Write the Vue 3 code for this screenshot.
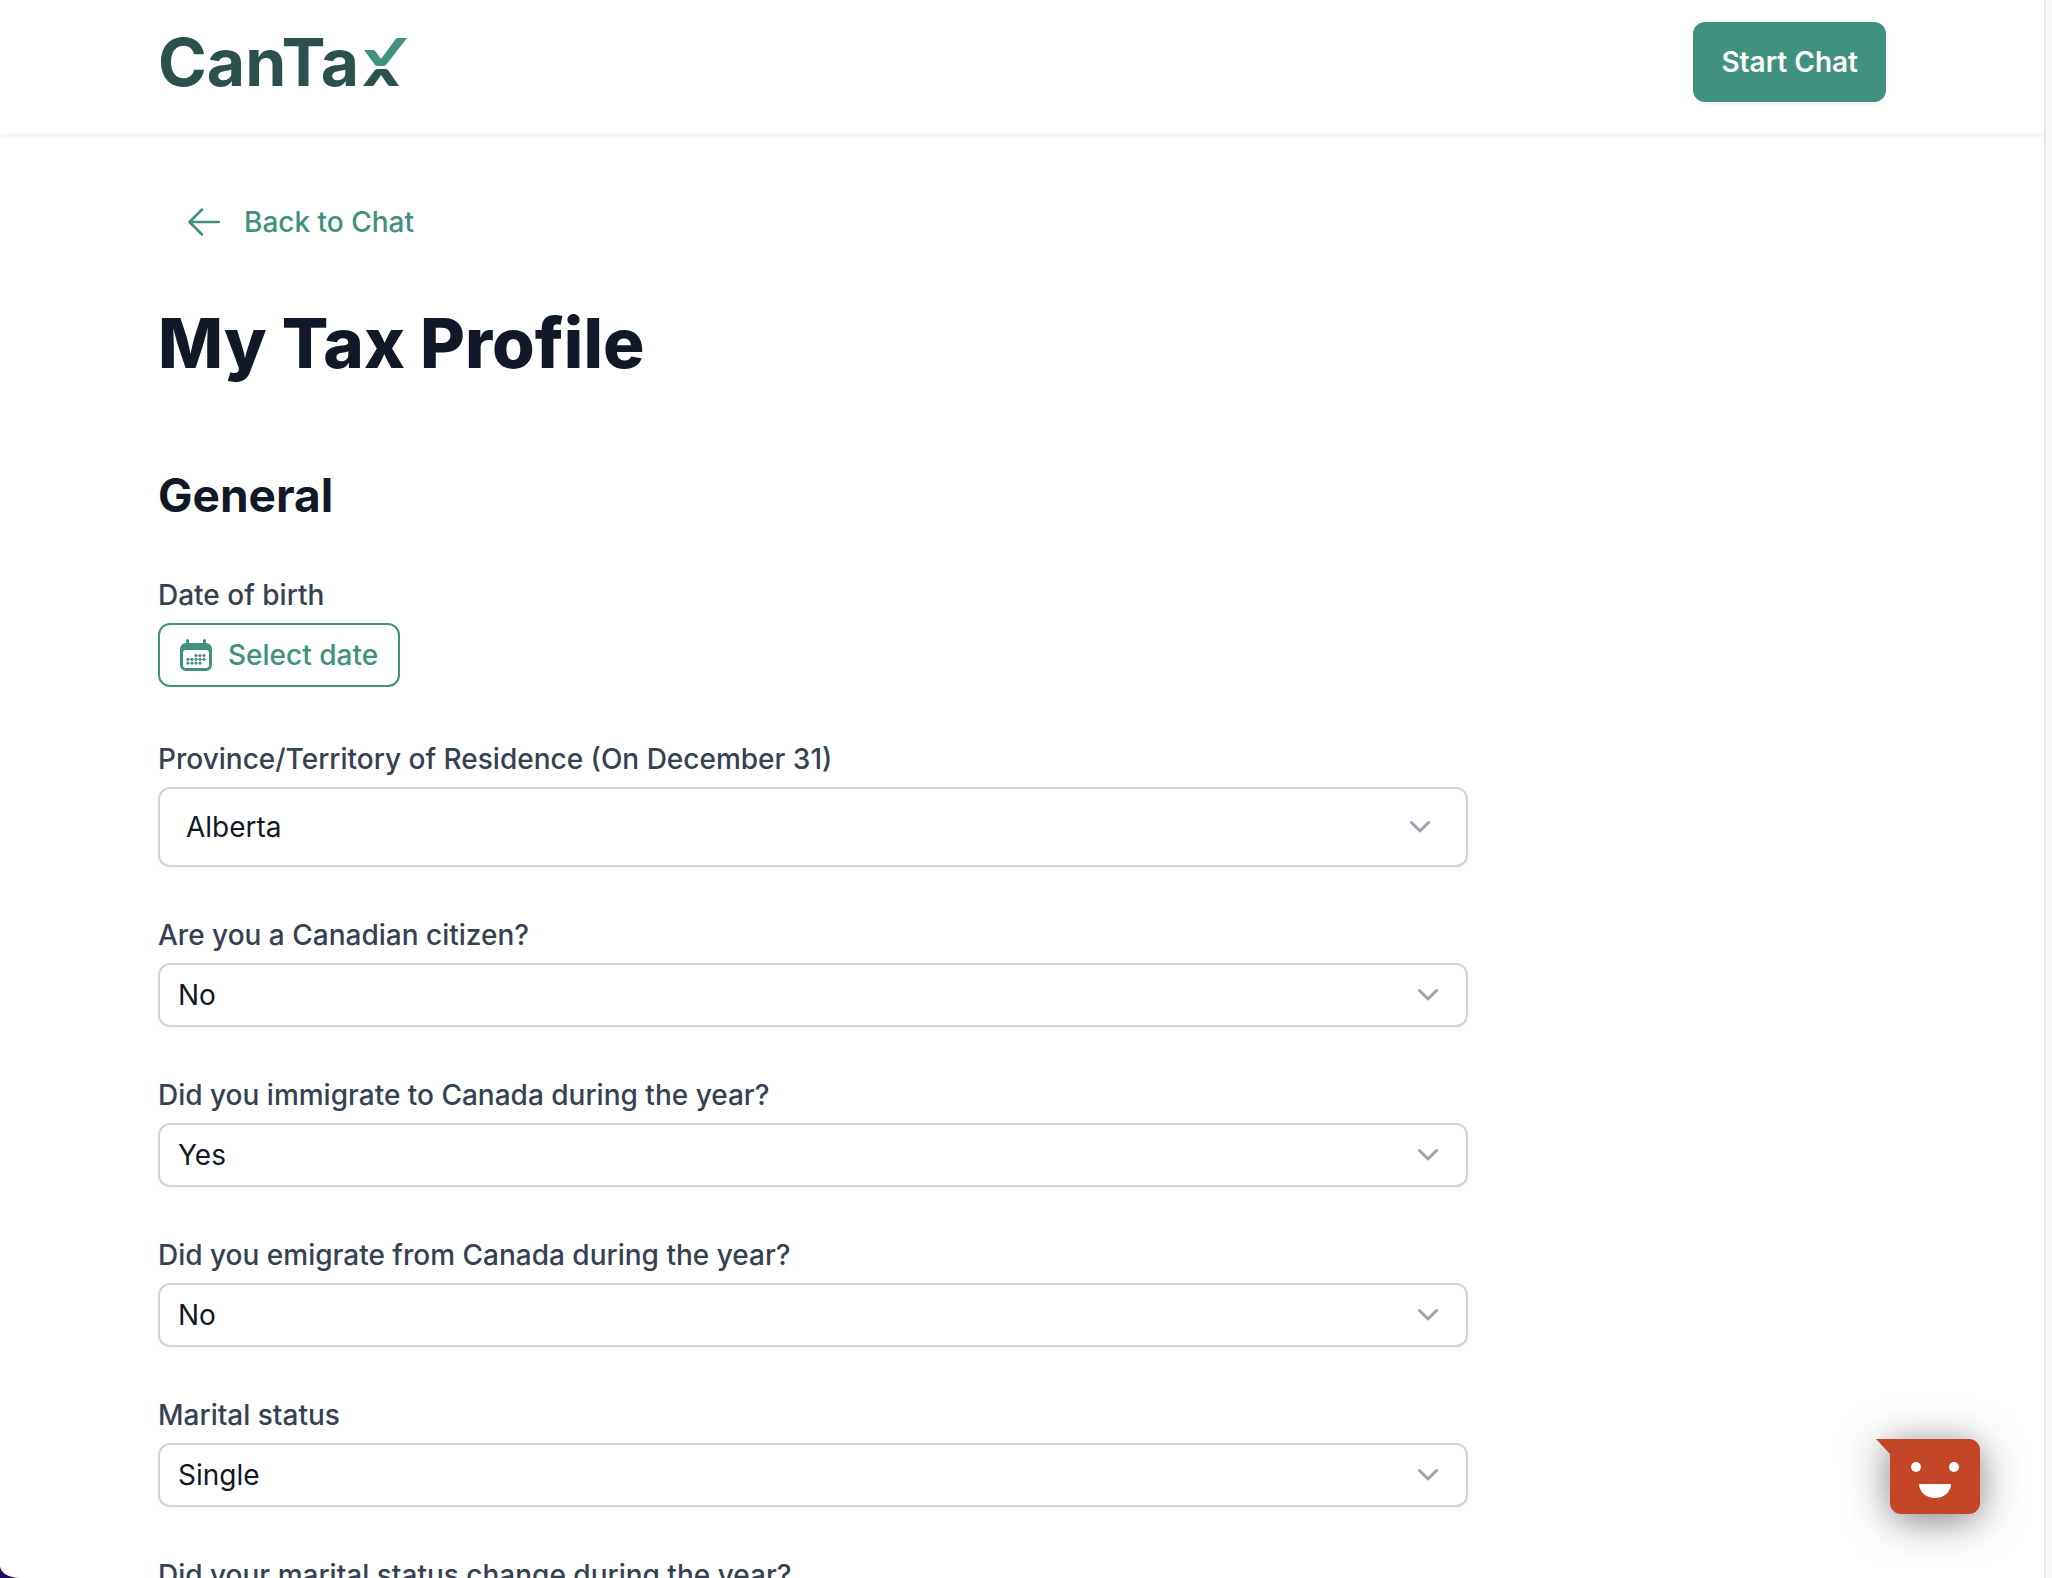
<script setup>
import { ref } from 'vue'

const provinces = ['Alberta', 'British Columbia', 'Manitoba', 'Ontario', 'Quebec', 'Saskatchewan']
const yesNo = ['Yes', 'No']

// Questions shown under the date of birth
const fields = ref([
  { id: 'province', label: 'Province/Territory of Residence (On December 31)', value: 'Alberta', options: provinces, large: true },
  { id: 'citizen', label: 'Are you a Canadian citizen?', value: 'No', options: yesNo },
  { id: 'immigrate', label: 'Did you immigrate to Canada during the year?', value: 'Yes', options: yesNo },
  { id: 'emigrate', label: 'Did you emigrate from Canada during the year?', value: 'No', options: yesNo },
  { id: 'marital', label: 'Marital status', value: 'Single', options: ['Single', 'Married', 'Divorced'] },
  { id: 'marital-change', label: 'Did your marital status change during the year?', value: 'No', options: yesNo }
])

// Dots of the calendar icon: the first row starts two columns in
const calendarDots = []
for (let row = 0; row < 3; row++) {
  for (let col = 0; col < 5; col++) {
    if ((row === 0 && col < 2) || (row === 2 && col === 4)) continue
    calendarDots.push({ x: 8 + col * 4, y: 16.5 + row * 3.8 })
  }
}
</script>

<template>
  <div class="shell">
    <div class="page">
      <header class="header">
        <div class="container header-inner">
          <a class="logo" href="#" aria-label="CanTax">
            <span>CanTa</span>
            <svg class="logo-mark" viewBox="0 0 44 50" width="44" height="50" aria-hidden="true">
              <path d="M1 13h9q2 0 3 2l5 7L32 3q1-2 3-2h9L23 28q-1 1-3 1h-5q-2 0-3-1z" fill="#40917f" />
              <path d="M15 32h7q2 0 3 1l11 16h-9q-1 0-2-1l-7-10-7 10q-1 1-2 1H0l12-16q1-1 3-1z" fill="#2a514e" />
            </svg>
          </a>
          <button type="button" class="start-chat">Start Chat</button>
        </div>
      </header>

      <main class="container main">
        <a class="back" href="#">
          <svg viewBox="0 0 32 28" width="32" height="28" aria-hidden="true">
            <path d="M14 1.5L1.5 14 14 26.5M1.5 14H31" />
          </svg>
          Back to Chat
        </a>
        <h1>My Tax Profile</h1>

        <form class="form" @submit.prevent>
          <h2>General</h2>
          <div class="field date-field">
            <label for="dob">Date of birth</label>
            <button id="dob" type="button" class="date-button">
              <svg viewBox="0 0 32 32" width="32" height="32" aria-hidden="true">
                <path fill-rule="evenodd" d="M6 4V1.5a1.5 1.5 0 0 1 3 0V4h14V1.5a1.5 1.5 0 0 1 3 0V4a6 6 0 0 1 6 6v16a6 6 0 0 1-6 6H6a6 6 0 0 1-6-6V10a6 6 0 0 1 6-6zM6 11a3 3 0 0 0-3 3v12a3 3 0 0 0 3 3h20a3 3 0 0 0 3-3V14a3 3 0 0 0-3-3z" />
                <circle v-for="(dot, i) in calendarDots" :key="i" :cx="dot.x" :cy="dot.y" r="1.6" />
              </svg>
              Select date
            </button>
          </div>

          <div v-for="field in fields" :key="field.id" class="field">
            <label :for="field.id">{{ field.label }}</label>
            <div class="select" :class="{ large: field.large }">
              <select :id="field.id" v-model="field.value">
                <option v-for="option in field.options" :key="option">{{ option }}</option>
              </select>
              <svg class="chevron" viewBox="0 0 20 12" width="20" height="12" aria-hidden="true">
                <path d="M1.5 1.5L10 10l8.5-8.5" />
              </svg>
            </div>
          </div>
        </form>
      </main>
    </div>
    <div class="scroll-track"></div>

    <button type="button" class="chat-widget" aria-label="Open chat">
      <svg viewBox="0 0 104 75" width="104" height="75" aria-hidden="true">
        <path d="M0 0h93a11 11 0 0 1 11 11v53a11 11 0 0 1-11 11H25a11 11 0 0 1-11-11V15z" fill="#c34727" />
        <circle cx="40" cy="28" r="5" fill="#fff" />
        <circle cx="78" cy="28" r="5" fill="#fff" />
        <path d="M43 45h32a16 14 0 0 1-32 0z" fill="#fff" />
      </svg>
    </button>
  </div>
</template>

<style>
body {
  background: #1d0a5e;
}
</style>

<style scoped>
* {
  box-sizing: border-box;
}

.shell {
  display: flex;
  height: 100vh;
  overflow: hidden;
  font-family: Inter, sans-serif;
  font-size: 28px;
  line-height: 40px;
  color: #111827;
}

.page {
  flex: 1;
  overflow: hidden;
  background: #fff;
  border-bottom-left-radius: 20px 12px;
}

.scroll-track {
  width: 8px;
  background: #fafafa;
  border-left: 2px solid #e8e8e8;
}

.container {
  max-width: 1728px;
  margin: 0 auto;
}

.header {
  height: 134px;
  padding-top: 22px;
  box-shadow: 0 2px 4px rgba(0, 0, 0, 0.06);
}

.header-inner {
  display: flex;
  align-items: center;
  justify-content: space-between;
}

.logo {
  display: flex;
  align-items: center;
  gap: 4px;
  font-size: 66px;
  font-weight: 700;
  line-height: 80px;
  color: #2a514e;
  text-decoration: none;
}

button {
  font: inherit;
  cursor: pointer;
}

.start-chat {
  height: 80px;
  padding: 0 28px;
  border: 0;
  border-radius: 12px;
  background: #40917f;
  color: #fff;
  font-weight: 600;
  box-shadow: 0 2px 4px rgba(0, 0, 0, 0.06);
}

.main {
  padding-top: 68px;
}

.back {
  display: inline-flex;
  align-items: center;
  gap: 24px;
  padding-left: 30px;
  color: #40917f;
  font-weight: 500;
  text-decoration: none;
}

.back path,
.chevron path {
  fill: none;
  stroke: #40917f;
  stroke-width: 2.5;
  stroke-linecap: round;
  stroke-linejoin: round;
}

h1 {
  margin: 57px 0 0;
  font-size: 69px;
  font-weight: 800;
  line-height: 80px;
}

h2 {
  margin: 0 0 48px;
  font-size: 46px;
  font-weight: 700;
  line-height: 64px;
}

.form {
  max-width: 1310px;
  margin-top: 80px;
}

.field {
  display: flex;
  flex-direction: column;
  align-items: flex-start;
  gap: 8px;
  margin-bottom: 48px;
}

.date-field {
  margin-bottom: 52px;
}

label {
  color: #374151;
  font-weight: 500;
}

.date-button {
  display: flex;
  align-items: center;
  gap: 16px;
  height: 64px;
  padding: 0 20px;
  border: 2px solid #40917f;
  border-radius: 12px;
  background: #fff;
  color: #40917f;
  font-weight: 500;
}

.date-button svg {
  fill: #40917f;
}

.select {
  position: relative;
  width: 100%;
}

select {
  display: block;
  width: 100%;
  height: 64px;
  padding: 0 18px;
  border: 2px solid #d1d5db;
  border-radius: 12px;
  background: #fff;
  color: #111827;
  font: inherit;
  appearance: none;
  box-shadow: 0 2px 4px rgba(0, 0, 0, 0.05);
}

.large select {
  height: 80px;
  padding: 0 26px;
}

.chevron {
  position: absolute;
  top: 50%;
  right: 30px;
  margin-top: -6px;
  pointer-events: none;
}

.large .chevron {
  right: 38px;
}

.chevron path {
  stroke: #9ca3af;
  stroke-width: 3;
}

.chat-widget {
  position: fixed;
  right: 72px;
  bottom: 64px;
  padding: 0;
  border: 0;
  background: none;
}

.chat-widget svg {
  display: block;
  filter: drop-shadow(0 6px 20px rgba(0, 0, 0, 0.5));
}
</style>
